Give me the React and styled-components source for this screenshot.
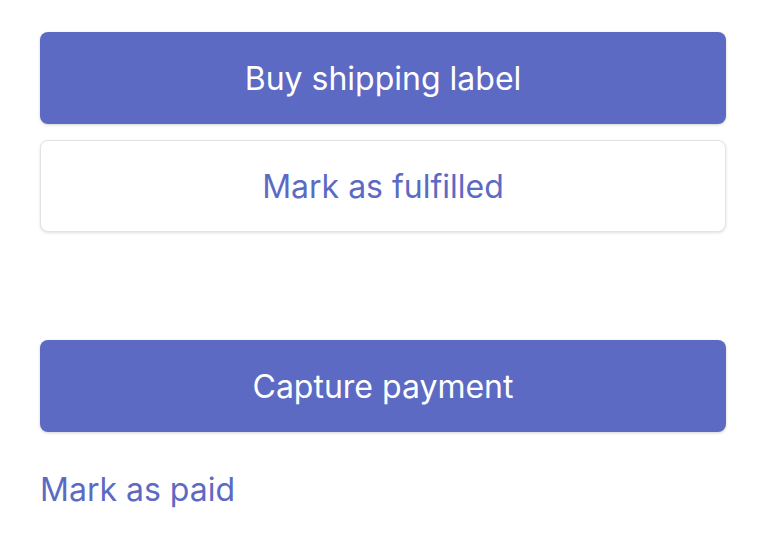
import React from "react";
import styled, { createGlobalStyle, css } from "styled-components";

const Global = createGlobalStyle`
  html, body { margin: 0; padding: 0; background: #ffffff; }
  body { font-family: Inter, "Noto Sans", sans-serif; -webkit-font-smoothing: antialiased; }
`;

const Page = styled.div`
  display: flex;
  flex-direction: column;
  padding: 32px 40px 0;
  gap: 108px;
`;

const Section = styled.div`
  display: flex;
  flex-direction: column;
  gap: 16px;
`;

const Button = styled.button`
  display: flex;
  align-items: center;
  justify-content: center;
  height: 92px;
  width: 100%;
  border-radius: 8px;
  font-family: inherit;
  font-size: 32px;
  font-weight: 400;
  cursor: pointer;
  ${(p) =>
    p.$variant === "primary"
      ? css`
          background: #5c6ac4;
          color: #ffffff;
          border: none;
          box-shadow: 0 1px 3px rgba(0, 0, 0, 0.18);
        `
      : css`
          background: #ffffff;
          color: #5c6ac4;
          border: 1px solid #e3e3e3;
          box-shadow: 0 1px 3px rgba(0, 0, 0, 0.12);
        `}
`;

const LinkButton = styled.button`
  align-self: flex-start;
  background: none;
  border: none;
  padding: 0;
  margin-top: 38px;
  font-family: inherit;
  font-size: 32px;
  color: #5c6ac4;
  cursor: pointer;
`;

const LastSection = styled.div`
  display: flex;
  flex-direction: column;
`;

export default function App() {
  return (
    <>
      <Global />
      <Page>
        <Section>
          <Button $variant="primary">Buy shipping label</Button>
          <Button $variant="secondary">Mark as fulfilled</Button>
        </Section>
        <LastSection>
          <Button $variant="primary">Capture payment</Button>
          <LinkButton>Mark as paid</LinkButton>
        </LastSection>
      </Page>
    </>
  );
}
